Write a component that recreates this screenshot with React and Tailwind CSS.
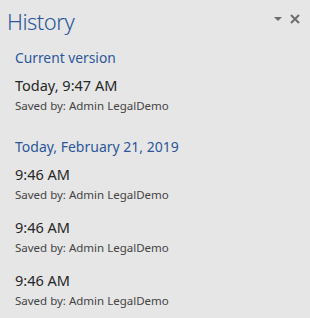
const versions = [
  { time: "9:46 AM", by: "Admin LegalDemo" },
  { time: "9:46 AM", by: "Admin LegalDemo" },
  { time: "9:46 AM", by: "Admin LegalDemo" },
];

const Entry = ({ time, by }) => (
  <div className="flex flex-col">
    <div className="text-[14.5px] leading-[20px] text-[#262626]">{time}</div>
    <div className="mt-[3px] text-[11.5px] leading-[16px] text-[#444]">Saved by: {by}</div>
  </div>
);

export default function App() {
  return (
    <div
      className="w-[310px] h-[318px] bg-[#e6e6e6] overflow-hidden"
      style={{ fontFamily: "'Noto Sans', 'Segoe UI', sans-serif" }}
    >
      <div className="flex items-start justify-between pl-[7px] pr-[10px] pt-[6px]">
        <h1 className="text-[22px] leading-[30px] font-light tracking-[-0.5px] text-[#2b579a]">History</h1>
        <div className="mt-[8px] flex h-[10px] items-center gap-[8px] text-[#6d6d6d]">
          <svg width="8" height="4" viewBox="0 0 8 4"><path d="M0 0h8L4 4z" fill="currentColor" /></svg>
          <svg width="10" height="10" viewBox="0 0 10 10">
            <path d="M1 1l8 8M9 1l-8 8" stroke="currentColor" strokeWidth="2" />
          </svg>
        </div>
      </div>

      <div className="flex flex-col pl-[15px]">
        <div className="mt-[12px] text-[13.8px] leading-[20px] text-[#2b579a]">Current version</div>
        <div className="mt-[7px]">
          <Entry time="Today, 9:47 AM" by="Admin LegalDemo" />
        </div>
        <div className="mt-[23px] text-[14px] leading-[20px] text-[#2b579a]">Today, February 21, 2019</div>
        <div className="mt-[7px] flex flex-col gap-[14px]">
          {versions.map((v, i) => (
            <Entry key={i} {...v} />
          ))}
        </div>
      </div>
    </div>
  );
}
